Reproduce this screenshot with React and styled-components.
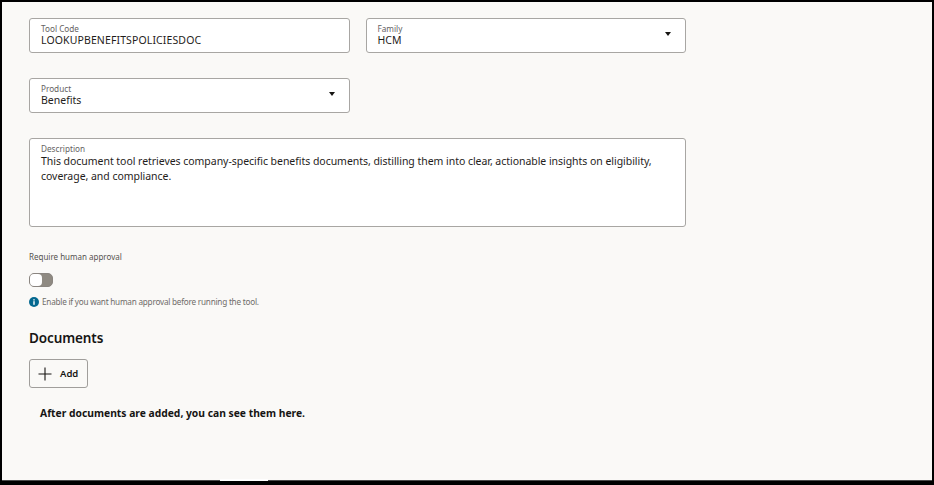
import React from 'react';
import styled, { createGlobalStyle } from 'styled-components';

const Global = createGlobalStyle`
  html, body { margin: 0; padding: 0; height: 100%; background: #000; }
  #root { height: 100%; }
`;

const Frame = styled.div`
  box-sizing: border-box;
  width: 934px;
  height: 485px;
  overflow: hidden;
  background: #000;
  padding: 2px 2px 4px 2px;
  font-family: "Noto Sans", "Open Sans", sans-serif;
  color: #161513;
`;

const Page = styled.main`
  position: relative;
  box-sizing: border-box;
  height: 100%;
  background: #faf9f7;
  border-bottom: 1px solid #4a4a4a;
  padding: 16px 0 0 27px;
  display: flex;
  flex-direction: column;
  align-items: flex-start;
`;

const BottomNotch = styled.div`
  position: absolute;
  left: 218px;
  bottom: -1px;
  width: 48px;
  height: 2px;
  background: #fff;
`;

const Row = styled.div`
  display: flex;
  gap: 16px;
  margin-bottom: ${p => p.$mb}px;
`;

const Field = styled.div`
  box-sizing: border-box;
  position: relative;
  width: ${p => p.$w}px;
  height: ${p => p.$h || 35}px;
  background: #fff;
  border: 1px solid #a8a6a3;
  border-radius: 3px;
  padding: 5px 11px 0;
`;

const Label = styled.div`
  font-size: 8.2px;
  line-height: 10px;
  color: #65625f;
`;

const Value = styled.div`
  font-size: 10.5px;
  line-height: ${p => (p.$multi ? 15 : 14)}px;
  margin-top: ${p => (p.$multi ? 0 : -1)}px;
  letter-spacing: ${p => p.$track || 0}px;
  color: #1f1d1b;
`;

const Arrow = styled.span`
  position: absolute;
  right: 14px;
  top: 13px;
  width: 0;
  height: 0;
  border-left: 3.5px solid transparent;
  border-right: 3.5px solid transparent;
  border-top: 4px solid #161513;
`;

const SmallLabel = styled.div`
  font-size: 8px;
  line-height: 12px;
  color: #55524f;
  margin-top: 24px;
`;

const Toggle = styled.div`
  box-sizing: border-box;
  width: 24px;
  height: 14px;
  margin-top: 10px;
  border-radius: 5px;
  border: 1px solid #8a8580;
  background: #8f8a82;
  display: flex;
  align-items: stretch;
`;

const Knob = styled.span`
  width: 12px;
  border-radius: 4px;
  background: #fff;
`;

const Help = styled.div`
  display: flex;
  align-items: center;
  gap: 3px;
  margin-top: 9px;
  font-size: 8.2px;
  line-height: 12px;
  letter-spacing: -0.23px;
  color: #6f6c69;
`;

const Heading = styled.h2`
  margin: 20px 0 0;
  font-size: 13.5px;
  line-height: 20px;
  font-weight: 600;
  letter-spacing: -0.1px;
  color: #161513;
`;

const AddButton = styled.button`
  box-sizing: border-box;
  display: flex;
  align-items: center;
  gap: 8px;
  width: 59px;
  height: 29px;
  margin-top: 11px;
  padding: 0 0 0 8px;
  background: transparent;
  border: 1px solid #a09e9b;
  border-radius: 3px;
  font-family: inherit;
  font-size: 9.5px;
  font-weight: 600;
  color: #161513;
`;

const Empty = styled.div`
  margin: 17px 0 0 11px;
  font-size: 10.3px;
  line-height: 16px;
  font-weight: 700;
  color: #161513;
`;

const InfoIcon = () => (
  <svg width="10" height="10" viewBox="0 0 10 10">
    <circle cx="5" cy="5" r="5" fill="#04688f" />
    <rect x="4.3" y="4.2" width="1.4" height="3.6" fill="#fff" />
    <rect x="4.3" y="2.2" width="1.4" height="1.3" fill="#fff" />
  </svg>
);

const PlusIcon = () => (
  <svg width="14" height="14" viewBox="0 0 14 14">
    <path d="M7 0.5V13.5M0.5 7H13.5" stroke="#161513" strokeWidth="1.1" fill="none" />
  </svg>
);

export default function App() {
  return (
    <>
      <Global />
      <Frame>
        <Page>
          <Row $mb={25}>
            <Field $w={320.5}>
              <Label>Tool Code</Label>
              <Value $track={0.12}>LOOKUPBENEFITSPOLICIESDOC</Value>
            </Field>
            <Field $w={320.5}>
              <Label>Family</Label>
              <Value>HCM</Value>
              <Arrow />
            </Field>
          </Row>
          <Row $mb={25}>
            <Field $w={320.5}>
              <Label>Product</Label>
              <Value>Benefits</Value>
              <Arrow />
            </Field>
          </Row>
          <Field $w={657} $h={89}>
            <Label>Description</Label>
            <Value $multi $track={-0.04}>
              This document tool retrieves company-specific benefits documents, distilling them into clear, actionable insights on eligibility, coverage, and compliance.
            </Value>
          </Field>
          <SmallLabel>Require human approval</SmallLabel>
          <Toggle><Knob /></Toggle>
          <Help><InfoIcon />Enable if you want human approval before running the tool.</Help>
          <Heading>Documents</Heading>
          <AddButton type="button"><PlusIcon />Add</AddButton>
          <Empty>After documents are added, you can see them here.</Empty>
          <BottomNotch />
        </Page>
      </Frame>
    </>
  );
}
